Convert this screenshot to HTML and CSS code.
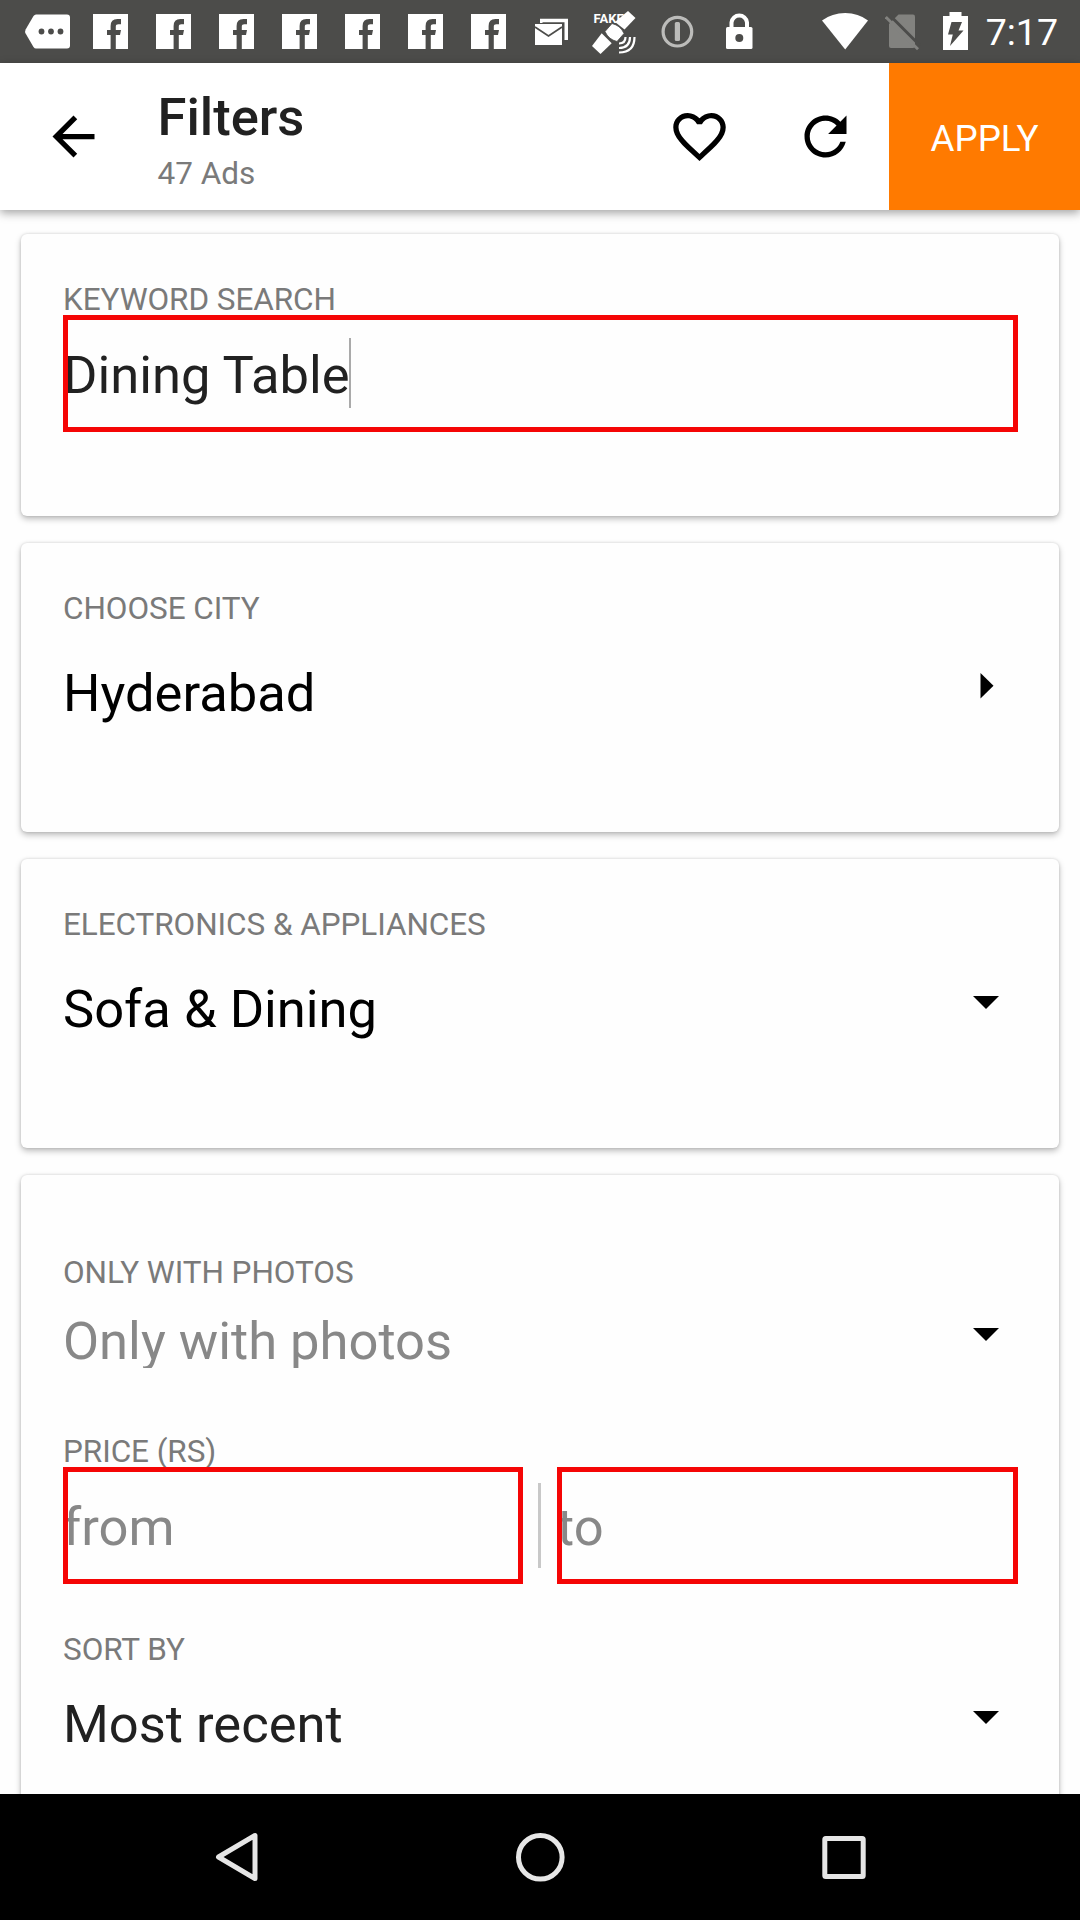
FILE: index.html
```html
<!DOCTYPE html>
<html lang="en">
<head>
<meta charset="utf-8">
<title>Filters</title>
<link rel="stylesheet" href="styles.css">
</head>
<body>
<svg class="defs" width="0" height="0" aria-hidden="true">
  <symbol id="facebook" viewBox="0 0 63 63">
    <path fill="#fff" fill-rule="evenodd" d="M14 14H49V49H36.8V35H41L42 30H36.8V26.6Q36.8 24.2 39.4 24.2H42V19H38.4Q31.6 19 31.6 26V30H28V35H31.6V49H14Z"/>
  </symbol>
  <symbol id="caret-down" viewBox="0 0 26 26"><path d="M0 8H26L13 21Z"/></symbol>
  <symbol id="caret-right" viewBox="0 0 26 26"><path d="M7.500 0L20.500 12.700L7.500 25.400Z"/></symbol>
</svg>

<div class="screen">
  <div class="status">
    <div class="notifications">
      <svg class="slot" viewBox="0 0 63 63"><path fill="#fff" d="M20 14.5H51Q54 14.5 54 17.5V45.500Q54 48.500 51 48.500H20Q18.500 48.500 17.500 47L9.600 33.500Q8.600 31.500 9.600 29.500L17.500 16Q18.500 14.500 20 14.500Z"/><g fill="#4c4c4a"><circle cx="25.500" cy="31.500" r="2.900"/><circle cx="35" cy="31.500" r="2.900"/><circle cx="44.500" cy="31.500" r="2.900"/></g></svg>
      <svg class="slot"><use href="#facebook"/></svg>
      <svg class="slot"><use href="#facebook"/></svg>
      <svg class="slot"><use href="#facebook"/></svg>
      <svg class="slot"><use href="#facebook"/></svg>
      <svg class="slot"><use href="#facebook"/></svg>
      <svg class="slot"><use href="#facebook"/></svg>
      <svg class="slot"><use href="#facebook"/></svg>
      <svg class="slot" viewBox="0 0 63 63"><path fill="#fff" d="M15 24H42V45H15Z"/><path fill="none" stroke="#4c4c4a" stroke-width="1.700" d="M15 27L28.500 36L42 27"/><path fill="#fff" d="M20 18.700H48V40H44.500V22.300H22.500V23H20Z"/></svg>
      <svg class="slot" viewBox="0 0 63 63"><text class="fake" x="10.500" y="23">FAKE</text><g fill="#fff"><path d="M45 11L52.500 18L41.500 29.500L32 22Z"/><path d="M18.700 33.300L28.700 43.300L17.500 54L9 46Z"/><path stroke="#4c4c4a" stroke-width=".8" d="M29 23.500Q37.500 25.500 41 33.500L34 41.500Q25.500 39.500 22 31.500Z"/></g><g fill="none" stroke="#fff" stroke-width="2.200"><path d="M51.500 37Q51.500 52.500 36 52.500M47 37Q47 48 36 48M42.500 37Q42.500 43.500 36 43.500"/></g></svg>
      <svg class="slot" viewBox="0 0 63 63"><circle cx="31.400" cy="31.700" r="14.300" fill="none" stroke="#bcbcba" stroke-width="3.200"/><rect x="28.800" y="22" width="5.200" height="19" rx="1.500" fill="#bcbcba"/></svg>
      <svg class="slot" viewBox="0 0 63 63"><path fill="none" stroke="#fff" stroke-width="4" d="M22.500 29V22.500A7.800 7.800 0 0 1 38 22.500V29"/><rect x="17" y="27" width="26.500" height="22" rx="1.500" fill="#fff"/><circle cx="30.300" cy="38" r="4" fill="#4c4c4a"/></svg>
    </div>
    <div class="system">
      <svg width="46" height="63" viewBox="0 0 46 63"><path fill="#fff" d="M0 20.500Q10 13 23.200 13T46 20.500L23.200 49.500Z"/></svg>
      <svg width="36" height="63" viewBox="0 0 36 63"><path fill="#82827f" d="M13.500 14.500H28Q30 14.500 30 16.500V46Q30 48 28 48H6Q4 48 4 46V24Z"/><path stroke="#4c4c4a" stroke-width="3" d="M4.500 15L35 45.500"/><path stroke="#82827f" stroke-width="2.800" d="M.8 17L33 49.200"/></svg>
      <svg width="25" height="63" viewBox="0 0 25 63"><path fill="#fff" d="M6.500 12H18.500V16H25V50H0V16H6.500Z"/><path fill="#4c4c4a" d="M8.500 22H19L15.500 30.500H20.500L7 46L9.800 34.500H5Z"/></svg>
      <span class="clock">7:17</span>
    </div>
  </div>

  <header class="appbar">
    <svg class="icon" viewBox="0 0 24 24"><path d="M20 11H7.830l5.590-5.590L12 4l-8 8 8 8 1.410-1.410L7.830 13H20v-2z"/></svg>
    <div class="heading">
      <h1 class="title">Filters</h1>
      <div class="count">47 Ads</div>
    </div>
    <svg class="icon" viewBox="0 0 24 24"><path d="M16.500 3c-1.740 0-3.410.81-4.500 2.090C10.910 3.810 9.240 3 7.500 3 4.420 3 2 5.420 2 8.500c0 3.780 3.400 6.860 8.550 11.540L12 21.350l1.450-1.320C18.600 15.360 22 12.280 22 8.500 22 5.420 19.580 3 16.500 3zm-4.400 15.550l-.1.100-.1-.1C7.140 14.240 4 11.390 4 8.500 4 6.500 5.500 5 7.500 5c1.540 0 3.040.99 3.570 2.360h1.870C13.460 5.990 14.960 5 16.500 5c2 0 3.500 1.500 3.500 3.500 0 2.890-3.140 5.740-7.900 10.050z"/></svg>
    <svg class="icon refresh" viewBox="0 0 24 24"><path d="M17.650 6.350C16.200 4.900 14.210 4 12 4c-4.420 0-7.990 3.580-7.990 8s3.570 8 7.990 8c3.730 0 6.840-2.550 7.730-6h-2.080c-.82 2.330-3.040 4-5.650 4-3.310 0-6-2.690-6-6s2.690-6 6-6c1.660 0 3.140.69 4.220 1.780L13 11h7V4l-2.350 2.350z"/></svg>
    <div class="apply">APPLY</div>
  </header>

  <main class="content">
    <section class="card keyword">
      <div class="label">KEYWORD SEARCH</div>
      <div class="field focused"><span class="text">Dining Table</span><i class="cursor"></i></div>
    </section>

    <section class="card choice">
      <div class="label">CHOOSE CITY</div>
      <div class="row"><span class="value">Hyderabad</span><svg class="caret"><use href="#caret-right"/></svg></div>
    </section>

    <section class="card choice category">
      <div class="label">ELECTRONICS &amp; APPLIANCES</div>
      <div class="row"><span class="value">Sofa &amp; Dining</span><svg class="caret"><use href="#caret-down"/></svg></div>
    </section>

    <section class="card details">
      <div class="label">ONLY WITH PHOTOS</div>
      <div class="row photos"><span class="value hint">Only with photos</span><svg class="caret"><use href="#caret-down"/></svg></div>
      <div class="label">PRICE (RS)</div>
      <div class="range">
        <div class="field hint from"><span class="text">from</span></div>
        <i class="divider"></i>
        <div class="field hint"><span class="text">to</span></div>
      </div>
      <div class="label">SORT BY</div>
      <div class="row sort"><span class="value dark">Most recent</span><svg class="caret"><use href="#caret-down"/></svg></div>
    </section>
  </main>

  <nav class="navbar">
    <svg width="60" height="60" viewBox="0 0 60 60"><path d="M49 8.500V51.500L12.500 30Z"/></svg>
    <svg width="60" height="60" viewBox="0 0 60 60"><circle cx="30.300" cy="30.300" r="21.800"/></svg>
    <svg width="60" height="60" viewBox="0 0 60 60"><rect x="10.800" y="11.500" width="38.400" height="38" rx="1"/></svg>
  </nav>
</div>
</body>
</html>
```
FILE: styles.css
```css
* { box-sizing: border-box; }

body {
  margin: 0;
  background: #fefefe;
  font-family: Roboto, "Liberation Sans", sans-serif;
}

svg { display: block; flex: none; }
.defs { position: absolute; }

.screen {
  display: flex;
  flex-direction: column;
  width: 1080px;
  height: 1920px;
  overflow: hidden;
}

/* Status bar */
.status {
  display: flex;
  flex: none;
  justify-content: space-between;
  height: 63px;
  padding: 0 22px 0 16px;
  background: #4c4c4a;
  color: #fff;
}
.notifications { display: flex; }
.slot { width: 63px; height: 63px; }
.fake { font-size: 13px; font-weight: 700; fill: #fff; }
.system { display: flex; }
.system svg + svg { margin-left: 17px; }
.system svg:nth-child(3) { margin-left: 22px; }
.clock {
  margin-left: 18px;
  font-size: 37.500px;
  line-height: 65px;
}

/* App bar */
.appbar {
  display: flex;
  flex: none;
  align-items: center;
  position: relative;
  height: 147px;
  padding-left: 42px;
  background: #fff;
  box-shadow: 0 3px 9px rgba(0, 0, 0, .36);
}
.icon { width: 63px; height: 63px; }
.heading { flex: 1; align-self: flex-start; padding: 23px 0 0 52.500px; }
.title {
  margin: 0;
  font-size: 52.500px;
  font-weight: 500;
  line-height: 62px;
  color: #212121;
}
.count {
  margin-top: 10px;
  font-size: 31.500px;
  line-height: 32px;
  color: #7a7a7a;
}
.refresh { margin: 0 32px 0 63px; }
.apply {
  width: 191px;
  background: #ff7a00;
  color: #fff;
  font-size: 36.750px;
  line-height: 151px;
  height: 147px;
  text-align: center;
}

/* Filter cards */
.content {
  flex: 1;
  min-height: 0;
  overflow: hidden;
  display: flex;
  flex-direction: column;
  gap: 27px;
  padding: 24px 21px 0;
}
.card {
  flex: none;
  padding: 49px 41px 0 42px;
  border-radius: 6px;
  background: #fefefe;
  box-shadow: 0 3px 6px rgba(0, 0, 0, .26), 0 0 3px rgba(0, 0, 0, .14);
}
.keyword { height: 282px; }
.choice { height: 289px; }
.details { height: 700px; padding-top: 81px; }

.label {
  height: 32px;
  font-size: 31.500px;
  letter-spacing: -.07px;
  line-height: 34px;
  color: #7a7a7a;
}
.row {
  display: flex;
  justify-content: space-between;
  height: 62px;
  margin-top: 38px;
  padding-right: 19px;
}
.value {
  font-size: 52.500px;
  line-height: 62px;
  color: #000;
}
.value.dark { color: #212121; }
.value.hint { color: #888; }
.caret { width: 26px; height: 26px; margin-top: 11px; }
.category .caret { margin-top: 10px; }

/* The row is shorter than its text, so descenders are clipped */
.photos { height: 58px; margin: 22px 0 67px; overflow: hidden; }
.photos .caret { margin-top: 10px; }
.sort { margin-top: 28px; }
.sort .caret { margin-top: 10px; }

.field {
  display: flex;
  position: relative;
  flex: 1;
  height: 117px;
  padding-top: 29px;
  font-size: 52.500px;
  line-height: 62px;
  color: #212121;
}
.field.hint { color: #888; }
.field.from { flex: 0 0 460px; }
/* The red frame is painted over the first letter of the field's text */
.field::after {
  content: "";
  position: absolute;
  inset: 0;
  border: 5px solid #f50505;
}
.cursor { width: 2px; height: 70px; margin: -6px 0 0 -1px; background: #aaa; }

.range { display: flex; margin-bottom: 49px; }
.divider { width: 3px; height: 85px; margin: 16px 16px 0 15px; background: #c8c8c8; }

/* Navigation bar */
.navbar {
  display: flex;
  flex: none;
  position: relative;
  justify-content: center;
  align-items: center;
  gap: 244px;
  height: 126px;
  background: #000;
}
.navbar svg {
  fill: none;
  stroke: #e6e6e6;
  stroke-width: 5px;
  stroke-linejoin: round;
}
```
